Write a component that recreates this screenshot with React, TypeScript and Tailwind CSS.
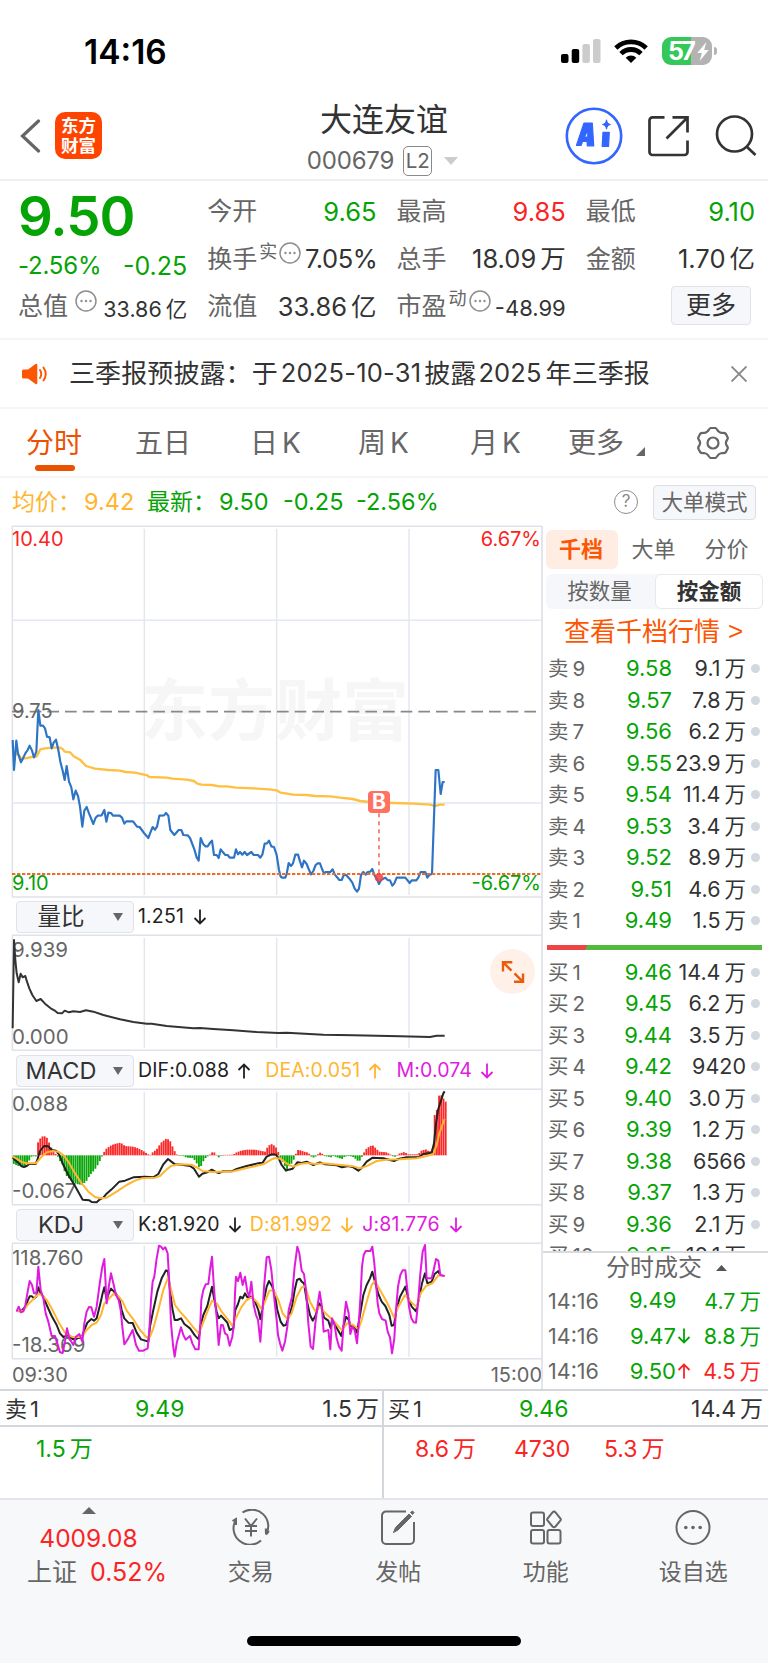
import React from "react";
import { clsx } from "clsx";

interface Level {
  name: string;
  price: string;
  amount: string;
}

const sells: Level[] = [
  { name: "9", price: "9.58", amount: "9.1万" },
  { name: "8", price: "9.57", amount: "7.8万" },
  { name: "7", price: "9.56", amount: "6.2万" },
  { name: "6", price: "9.55", amount: "23.9万" },
  { name: "5", price: "9.54", amount: "11.4万" },
  { name: "4", price: "9.53", amount: "3.4万" },
  { name: "3", price: "9.52", amount: "8.9万" },
  { name: "2", price: "9.51", amount: "4.6万" },
  { name: "1", price: "9.49", amount: "1.5万" },
];

const buys: Level[] = [
  { name: "1", price: "9.46", amount: "14.4万" },
  { name: "2", price: "9.45", amount: "6.2万" },
  { name: "3", price: "9.44", amount: "3.5万" },
  { name: "4", price: "9.42", amount: "9420" },
  { name: "5", price: "9.40", amount: "3.0万" },
  { name: "6", price: "9.39", amount: "1.2万" },
  { name: "7", price: "9.38", amount: "6566" },
  { name: "8", price: "9.37", amount: "1.3万" },
  { name: "9", price: "9.36", amount: "2.1万" },
  { name: "10", price: "9.35", amount: "10.1万" },
];

// Chart series, three units per screen pixel
const PRICE =
  "38,660 42,750 49,662 54,700 63,727 70,713 76,700 83,690 89,677 96,692 102,712 109,695 115,570 121,617 129,617 135,625 141,650 149,652 155,685 161,668 168,659 175,690 181,725 188,752 194,780 200,738 207,785 214,802 220,838 227,812 234,828 240,860 247,920 253,872 260,861 267,880 280,912 287,893 293,887 305,886 313,870 319,905 325,878 333,879 339,887 359,887 366,893 373,911 379,904 399,904 411,920 419,921 432,939 445,954 451,938 458,921 465,929 471,920 478,887 492,886 498,879 505,887 511,930 523,945 536,930 544,930 550,945 563,946 570,954 583,988 590,1012 596,1022 602,954 609,971 616,979 623,979 629,970 636,962 642,1005 650,1005 656,1014 662,988 669,997 676,1005 683,1005 689,1013 702,1013 708,988 714,1003 720,996 727,1004 734,996 741,1005 754,996 761,1005 774,1005 781,1013 787,1004 794,971 801,970 807,962 814,979 822,981 830,1005 837,1050 842,1070 846,1073 856,1073 860,1062 866,1029 873,1038 879,1030 886,1004 894,1004 900,1024 906,1042 912,1022 920,1032 926,1047 933,1063 940,1053 947,1035 953,1030 960,1030 966,1047 972,1060 978,1056 991,1056 998,1048 1004,1063 1018,1080 1025,1080 1032,1064 1038,1065 1050,1078 1057,1088 1064,1106 1071,1115 1077,1106 1083,1065 1090,1056 1097,1064 1103,1056 1111,1055 1117,1047 1123,1065 1130,1075 1137,1092 1143,1080 1156,1073 1163,1080 1170,1081 1177,1097 1183,1090 1190,1073 1216,1073 1229,1089 1235,1081 1249,1081 1255,1073 1262,1056 1276,1056 1282,1073 1289,1064 1296,1062 1307,750 1315,750 1322,822 1328,786 1334,786";
const AVERAGE =
  "38,700 50,702 56,705 63,715 76,715 95,711 109,710 115,700 121,688 135,685 155,683 180,683 188,687 194,695 210,697 221,709 240,719 258,738 285,746 325,750 360,752 377,756 405,758 432,764 440,765 448,771 500,773 517,776 560,779 582,783 592,791 605,794 635,795 658,799 680,799 708,803 760,805 815,809 830,811 842,818 880,824 920,825 945,828 990,829 1020,833 1058,837 1080,843 1110,846 1180,849 1240,851 1290,854 1305,858 1320,854 1334,854";
const RATIO =
  "38,295 42,30 46,90 50,130 56,157 62,131 68,142 76,138 80,152 88,175 97,195 109,213 122,207 135,221 152,235 163,241 173,249 186,250 194,242 207,247 220,244 240,246 258,241 280,245 310,255 360,268 400,276 440,281 455,281 500,288 580,295 600,294 640,297 700,301 770,306 835,309 860,308 970,314 1060,316 1200,319 1290,321 1310,317 1334,317";
const DIF =
  "38,682 45,690 55,698 65,709 72,711 80,708 88,702 107,702 112,690 120,663 132,648 145,649 155,660 168,662 178,675 190,705 205,735 225,768 240,795 248,809 268,811 275,816 290,817 300,808 310,803 318,793 335,778 358,755 375,752 400,742 435,740 460,742 475,732 490,703 504,687 517,697 525,703 545,704 570,708 582,716 597,740 607,731 622,727 635,719 650,727 657,729 668,724 695,724 710,717 740,708 775,700 788,698 800,680 815,673 828,674 836,685 845,705 858,722 866,719 878,716 892,697 905,699 920,695 940,705 960,697 975,703 995,704 1010,706 1026,712 1045,708 1060,712 1075,722 1085,714 1100,695 1118,683 1150,685 1182,693 1195,687 1220,682 1255,682 1270,672 1295,668 1302,640 1308,580 1314,540 1322,515 1330,490 1334,484";
const DEA =
  "38,680 50,686 65,696 80,700 108,700 125,680 140,667 158,663 175,665 190,675 205,695 225,730 245,760 265,785 285,801 300,805 320,803 350,785 380,765 405,752 425,745 465,743 480,738 500,718 515,707 540,703 575,704 590,712 608,723 640,726 700,724 740,714 790,703 815,688 825,684 842,686 855,697 870,706 880,710 900,702 920,699 945,702 970,700 1000,703 1030,706 1060,709 1080,715 1105,706 1130,693 1160,689 1200,688 1250,685 1280,678 1300,672 1310,645 1318,610 1326,588 1334,567";
const J =
  "50,1144 56,1130 63,1147 70,1144 76,1125 83,1085 89,1053 96,1065 102,1090 109,1090 115,1010 122,1080 130,1105 137,1150 145,1175 155,1218 165,1218 172,1240 180,1267 188,1269 195,1235 201,1195 208,1225 220,1245 228,1220 238,1212 247,1235 253,1180 260,1145 267,1131 274,1132 282,1160 290,1130 300,1055 307,1010 313,987 320,1120 327,1065 333,1030 340,1060 348,1095 356,1110 362,1140 367,1190 373,1243 385,1225 398,1200 408,1245 417,1262 430,1262 443,1255 448,1200 453,1110 458,1055 463,1040 470,985 477,947 483,950 489,958 496,952 503,970 508,1060 513,1180 519,1245 524,1280 530,1240 543,1192 550,1215 557,1229 570,1218 577,1240 586,1258 596,1258 601,1180 604,1110 610,1080 617,1063 625,1062 630,1020 636,980 641,1060 645,1115 650,1160 656,1245 663,1185 669,1186 675,1210 682,1215 689,1247 697,1220 702,1180 705,1090 708,1040 714,1053 721,1028 728,1065 735,1040 742,1085 748,1100 754,1055 761,1125 768,1155 774,1170 781,1235 787,1150 793,1060 800,982 807,980 814,1020 820,1080 830,1170 834,1215 840,1240 847,1262 855,1235 862,1190 866,1140 876,1100 884,1010 892,950 898,970 905,1022 912,1032 918,1080 925,1180 932,1250 939,1257 946,1180 953,1125 959,1085 965,1125 971,1205 985,1200 991,1258 996,1165 1003,1180 1010,1225 1017,1250 1025,1262 1031,1180 1038,1115 1046,1150 1051,1212 1057,1190 1064,1200 1071,1240 1077,1170 1082,1090 1086,1010 1091,975 1097,963 1111,963 1117,950 1123,1000 1128,1060 1133,1120 1138,1150 1146,1167 1157,1172 1163,1205 1170,1222 1176,1270 1183,1225 1188,1140 1194,1070 1201,1035 1208,1021 1216,1021 1221,1070 1227,1130 1234,1165 1241,1177 1248,1178 1254,1120 1261,1030 1268,965 1275,945 1280,1045 1295,1045 1301,1020 1308,987 1315,992 1321,1035 1334,1038";
const K =
  "50,1143 63,1144 76,1130 83,1112 89,1099 96,1099 102,1105 109,1100 115,1072 122,1090 130,1100 140,1125 155,1158 170,1185 180,1210 190,1221 203,1216 220,1228 245,1222 253,1200 262,1178 274,1167 282,1172 290,1165 300,1125 308,1090 313,1072 320,1108 327,1088 333,1076 345,1088 358,1105 365,1140 373,1165 385,1178 398,1179 410,1208 423,1228 445,1235 450,1190 460,1140 472,1085 485,1045 498,1021 504,1023 510,1080 517,1135 524,1170 532,1170 543,1165 553,1182 570,1195 585,1217 596,1228 602,1185 610,1155 622,1128 630,1095 636,1070 643,1110 650,1145 656,1165 663,1157 675,1170 682,1178 689,1200 700,1195 706,1140 714,1122 721,1100 728,1105 735,1090 742,1102 754,1100 765,1115 775,1140 781,1168 790,1120 800,1070 807,1053 816,1068 824,1090 832,1140 842,1175 850,1187 858,1185 868,1155 876,1130 884,1080 891,1050 899,1046 905,1055 912,1060 920,1110 930,1155 938,1172 946,1158 958,1120 965,1130 972,1163 985,1172 992,1195 996,1170 1005,1185 1024,1218 1030,1190 1038,1160 1046,1170 1052,1188 1062,1190 1071,1208 1080,1155 1090,1095 1100,1065 1110,1045 1117,1025 1125,1055 1135,1092 1145,1115 1156,1128 1168,1155 1175,1187 1182,1185 1190,1135 1200,1100 1216,1070 1225,1105 1235,1130 1248,1144 1256,1110 1266,1060 1275,1030 1282,1060 1295,1055 1304,1032 1315,1023 1320,1035";
const D =
  "50,1143 70,1142 85,1122 100,1108 115,1092 125,1094 140,1110 155,1135 175,1175 195,1208 215,1220 245,1222 260,1200 275,1185 290,1178 303,1155 313,1120 325,1108 340,1092 355,1098 368,1115 380,1142 400,1168 420,1200 440,1222 450,1220 460,1195 475,1140 490,1080 504,1043 515,1085 525,1125 540,1145 560,1167 580,1192 596,1210 605,1190 620,1150 636,1112 650,1120 665,1145 685,1170 697,1187 710,1160 725,1130 740,1110 755,1102 770,1115 785,1138 795,1115 808,1082 820,1080 835,1110 848,1150 862,1167 875,1150 890,1100 905,1072 915,1068 930,1115 945,1142 958,1130 975,1148 1000,1172 1025,1200 1042,1180 1060,1185 1075,1198 1085,1170 1100,1115 1115,1065 1125,1053 1140,1080 1160,1115 1182,1162 1195,1130 1215,1095 1235,1118 1250,1130 1262,1090 1278,1068 1297,1060 1315,1036 1334,1038";

// MACD histogram envelope around the zero line
const ZERO = 676;
const HIST: [number, number][] = [
  [38, 700], [55, 708], [72, 710], [85, 698], [92, 682], [97, 678], [107, 680], [111, 676], [113, 640], [118, 628],
  [130, 617], [140, 622], [147, 637], [155, 655], [165, 670], [172, 676], [178, 690], [188, 705], [197, 735], [207, 745],
  [218, 755], [230, 762], [247, 765], [260, 752], [270, 735], [285, 718], [295, 702], [305, 682], [307, 676], [311, 668],
  [318, 657], [330, 648], [343, 642], [362, 638], [375, 648], [400, 650], [415, 655], [430, 663], [440, 670], [450, 676],
  [458, 667], [470, 658], [483, 638], [500, 625], [510, 632], [520, 655], [528, 672], [535, 676], [550, 678], [560, 683],
  [580, 684], [590, 700], [600, 717], [607, 698], [618, 682], [627, 677], [632, 671], [640, 664], [647, 672], [652, 677],
  [658, 684], [664, 675], [700, 674], [708, 668], [720, 663], [740, 659], [765, 659], [795, 665], [800, 655], [812, 641],
  [825, 648], [833, 660], [838, 677], [850, 700], [861, 720], [868, 708], [877, 698], [885, 680], [888, 670], [893, 660],
  [902, 661], [912, 665], [925, 668], [930, 675], [935, 681], [943, 683], [950, 677], [955, 671], [962, 667], [970, 674],
  [972, 678], [985, 680], [995, 682], [1000, 678], [1012, 682], [1026, 687], [1035, 679], [1050, 678], [1062, 682],
  [1072, 692], [1083, 692], [1087, 676], [1092, 668], [1100, 655], [1117, 645], [1128, 655], [1137, 665], [1160, 667],
  [1174, 675], [1182, 682], [1190, 677], [1197, 671], [1213, 666], [1225, 673], [1255, 673], [1262, 663], [1277, 658],
  [1287, 664], [1297, 662], [1301, 600], [1305, 540], [1311, 540], [1317, 497], [1325, 496], [1330, 505], [1337, 515],
];

const histAt = (x: number) => {
  const i = HIST.findIndex(([px]) => px >= x);
  if (i <= 0) return HIST[i === 0 ? 0 : HIST.length - 1][1];
  const [x0, y0] = HIST[i - 1];
  const [x1, y1] = HIST[i];
  return y0 + ((y1 - y0) * (x - x0)) / (x1 - x0);
};

const bars = Array.from({ length: 197 }, (_, i) => {
  const x = 41.5 + i * 6.61;
  return { x, y: histAt(x) };
});

// Splits the trailing unit off so it can sit slightly apart from the digits
const Num = ({ v, unit = "ml-[4px]" }: { v: string; unit?: string }) => {
  const m = v.match(/^([^万亿]*)([万亿]?)$/);
  return (
    <span className="whitespace-nowrap">
      {m?.[1]}
      {m?.[2] && <span className={unit}>{m[2]}</span>}
    </span>
  );
};

const Dots = ({ className }: { className?: string }) => (
  <svg viewBox="0 0 22 22" className={clsx("h-[22px] w-[22px] shrink-0", className)}>
    <circle cx="11" cy="11" r="10" fill="none" stroke="#8e8e8e" strokeWidth="1.5" />
    <circle cx="6.5" cy="11" r="1.2" fill="#8e8e8e" />
    <circle cx="11" cy="11" r="1.2" fill="#8e8e8e" />
    <circle cx="15.5" cy="11" r="1.2" fill="#8e8e8e" />
  </svg>
);

const StatusBar = () => (
  <div className="flex h-[92px] items-start pt-[31px] pl-[84px] pr-[51px]">
    <div className="flex h-10 items-center pt-[2px] text-[33.5px] font-semibold tracking-[0px] text-black">14:16</div>
    <div className="ml-auto flex h-10 items-center">
      <svg viewBox="0 0 40 24" className="h-6 w-10">
        <rect x="0" y="15" width="7.5" height="9" rx="2" fill="#000" />
        <rect x="10.7" y="10" width="7.5" height="14" rx="2" fill="#000" />
        <rect x="21.4" y="5" width="7.5" height="19" rx="2" fill="#ccc" />
        <rect x="32" y="0" width="7.5" height="24" rx="2" fill="#ccc" />
      </svg>
      <svg viewBox="0 0 34 24" className="ml-[13px] h-6 w-[34px]" fill="none" stroke="#000" strokeWidth="4.8">
        <path d="M1.8 9a22 22 0 0 1 30.4 0" />
        <path d="M7 14.6a14.3 14.3 0 0 1 20 0" />
        <path d="M17 24l-5.3-5.3a7.6 7.6 0 0 1 10.6 0z" fill="#000" stroke="none" />
      </svg>
      <div className="ml-[14px] flex items-center">
        <div className="flex h-7 w-[50px] items-center rounded-[9px] bg-[linear-gradient(90deg,#34c759_58%,#b3b3b3_58%)] pl-[6px] text-[25px] leading-[28px] font-bold tracking-[-2.8px] text-white">
          57
          <svg viewBox="0 0 12 20" className="ml-[4px] h-[19px] w-[12px]">
            <path d="M9.500 0L0 11.500h4.800L2.500 20 12 8.500H7.200z" fill="#fff" />
          </svg>
        </div>
        <div className="ml-[2px] h-2 w-[3px] rounded-r-full bg-[#b3b3b3]" />
      </div>
    </div>
  </div>
);

const Header = () => (
  <header className="flex h-[89px] items-start border-b-2 border-[#f0f0f0]">
    <div className="flex h-[87px] w-[280px] items-start pl-[20px] pt-5">
      <svg viewBox="0 0 21 34" className="mt-[7px] h-[34px] w-[21px]" fill="none" stroke="#666" strokeWidth="3.2" strokeLinecap="round">
        <path d="M18.5 2L2.5 17l16 15" />
      </svg>
      <div className="ml-3.5 flex h-[47px] w-[47px] flex-col items-center justify-center rounded-[10px] bg-[#ff4400] text-[17.500px] leading-[20px] font-bold text-white">
        <span>东方</span>
        <span>财富</span>
      </div>
    </div>
    <div className="flex flex-1 flex-col items-center pt-[11px]">
      <div className="text-[32px] leading-[34px] text-[#333]">大连友谊</div>
      <div className="mt-[9px] flex h-[30px] items-center pr-[3px] text-[24px] whitespace-nowrap text-[#666]">
        <span className="tracking-[-0.2px]">000679</span>
        <span className="ml-[9px] flex h-[30px] w-[29px] items-center justify-center rounded-[5px] border-[1.5px] border-[#8a8a8a] text-[20.500px] leading-[26px]">
          L2
        </span>
        <svg viewBox="0 0 14 8" className="ml-3 h-2 w-3.5">
          <path d="M0 0h14l-7 8z" fill="#ccc" />
        </svg>
      </div>
    </div>
    <div className="flex w-[280px] justify-end pr-[11px] pt-[15px]">
      <svg viewBox="0 0 58 58" className="h-[58px] w-[58px]">
        <circle cx="29" cy="29" r="27.2" fill="none" stroke="#3366ff" strokeWidth="2.6" />
        <g fill="#3366ff" stroke="#3366ff" strokeWidth="1.2" strokeLinejoin="round">
          <path fillRule="evenodd" d="M11.500 38.300L19 16h8.300l1.400 22.800h-6.400l-.2-4.300h-4.600l-1.500 4zM19.500 30l3.200-7 .1 7z" />
          <path d="M38 25.300h6.300l-.8 14.200h-6.300z" />
        </g>
        <path d="M41.500 12.800c.6 3.200 1.500 4 4 4.700-2.500.7-3.400 1.500-4 4.700-.6-3.200-1.500-4-4-4.700 2.500-.7 3.400-1.500 4-4.700z" fill="#3366ff" stroke="#3366ff" />
      </svg>
      <svg viewBox="0 0 42 42" className="ml-[24px] mt-[8px] h-[42px] w-[42px]" fill="none" stroke="#333" strokeWidth="2.7">
        <path d="M17.500 2.400H5.500a3 3 0 0 0-3 3V37a3 3 0 0 0 3 3h32a3 3 0 0 0 3-3V25.500" />
        <path d="M25.500 2.400h15V17.500M40 3L19.500 23.500" />
      </svg>
      <svg viewBox="0 0 42 42" className="ml-[26px] mt-[8px] h-[42px] w-[42px]" fill="none" stroke="#333" strokeWidth="2.7">
        <circle cx="19.500" cy="19" r="17.500" />
        <path d="M31.500 31.500l9 8.500" />
      </svg>
    </div>
  </header>
);

const Cell = ({ label, value, color = "text-[#333]" }: { label: string; value: string; color?: string }) => (
  <div className="flex h-[47.5px] items-center justify-between">
    <span className="text-[25px] text-[#666]">{label}</span>
    <span className={clsx("text-[25.5px]", color)}>
      <Num v={value} />
    </span>
  </div>
);

const Quote = () => (
  <section className="grid h-[159px] grid-cols-4 gap-x-5 border-b-2 border-[#f5f5f5] pl-[18px] pr-[13px] pt-[7px]">
    <div>
      <div className="flex h-[55px] items-center pt-[2px] text-[54.500px] font-semibold tracking-[-1px] text-[#06a306]">9.50</div>
      <div className="flex h-[40px] items-center justify-between pt-[5px] text-[#06a306]">
        <span className="text-[24px] tracking-[-0.2px]">-2.56%</span>
        <span className="pt-[2px] text-[25px]">-0.25</span>
      </div>
      <div className="flex h-[47.5px] items-center">
        <span className="text-[25px] text-[#666]">总值</span>
        <Dots className="-mt-3 ml-[7px]" />
        <span className="ml-auto pt-1 text-[21.500px] text-[#333]">
          <Num v="33.86亿" />
        </span>
      </div>
    </div>
    <div>
      <Cell label="今开" value="9.65" color="text-[#06a306]" />
      <div className="flex h-[47.5px] items-center">
        <span className="text-[25px] text-[#666]">换手</span>
        <span className="-mt-4 ml-[2px] text-[18px] text-[#666]">实</span>
        <Dots className="-mt-3 ml-[2px]" />
        <span className="-mr-[1px] ml-auto text-[25.5px] tracking-[-0.4px] text-[#333]">7.05%</span>
      </div>
      <Cell label="流值" value="33.86亿" />
    </div>
    <div>
      <Cell label="最高" value="9.85" color="text-[#fa2424]" />
      <Cell label="总手" value="18.09万" />
      <div className="flex h-[47.5px] items-center">
        <span className="text-[25px] text-[#666]">市盈</span>
        <span className="-mt-4 ml-[2px] text-[18px] text-[#666]">动</span>
        <Dots className="-mt-3 ml-[2px]" />
        <span className="ml-auto pt-1 text-[22px] text-[#333]">-48.99</span>
      </div>
    </div>
    <div>
      <Cell label="最低" value="9.10" color="text-[#06a306]" />
      <Cell label="金额" value="1.70亿" />
      <div className="flex h-[47.5px] items-center justify-end pr-[4px] pb-[3px]">
        <button className="h-[39px] w-[80px] rounded-[4px] border-[1.5px] border-[#e2e3e8] bg-[#f6f7fa] text-[25px] leading-[36px] text-[#333]">
          更多
        </button>
      </div>
    </div>
  </section>
);

const Notice = () => (
  <div className="flex h-[69px] items-center border-b-2 border-[#f5f5f5] pl-[22px] pr-[21px]">
    <svg viewBox="0 0 26 22" className="h-[22px] w-[26px]">
      <path d="M0 8q0-1.500 1.500-1.500H6L13.500 1q1.800-.8 1.800 1v18q0 1.800-1.800 1L6 15.500H1.500Q0 15.500 0 14z" fill="#fc5602" />
      <path d="M18 7q2.500 4 0 8M21.500 4.500q4.500 6.500 0 13" fill="none" stroke="#fc5602" strokeWidth="1.900" strokeLinecap="round" />
    </svg>
    <span className="ml-[21px] flex text-[26px] tracking-[0.1px] whitespace-nowrap text-[#333]">
      <span>三季报预披露：于</span>
      <span className="ml-[3px] text-[25.500px] tracking-[0.2px]">2025-10-31</span>
      <span className="ml-[3px]">披露</span>
      <span className="ml-[2px] text-[25.500px]">2025</span>
      <span className="ml-[4px]">年三季报</span>
    </span>
    <svg viewBox="0 0 16 16" className="ml-auto h-4 w-4" stroke="#888" strokeWidth="1.900">
      <path d="M.5.5l15 15M15.500.5l-15 15" />
    </svg>
  </div>
);

const Tabs = () => (
  <nav className="flex h-[69px] items-center border-b-2 border-[#f5f5f5] text-[28px] whitespace-nowrap text-[#666]">
    <div className="relative ml-[26px] w-[109px] text-[#eb5200]">
      分时
      <div className="absolute top-[43px] left-[9px] h-[6px] w-[40px] rounded-full bg-[#eb5200]" />
    </div>
    <div className="w-[115px]">五日</div>
    <div className="w-[108px]">日<span className="ml-1">K</span></div>
    <div className="w-[112px]">周<span className="ml-1">K</span></div>
    <div className="w-[98px]">月<span className="ml-1">K</span></div>
    <div className="flex items-center">
      更多
      <svg viewBox="0 0 9 9" className="mt-[18px] ml-[12px] h-[9px] w-[9px]">
        <path d="M9 0v9H0z" fill="#666" />
      </svg>
    </div>
    <svg viewBox="0 0 34 32" className="ml-[51px] h-8 w-[34px]" fill="none" stroke="#666" strokeWidth="2.200" strokeLinejoin="round">
      <path d="M13 2.500q1-1.500 2-1.500h4q1 0 2 1.500 1.800 3.200 5 3.500 3-.2 3.800.8l1.900 3.600q.5 1-.7 2.600-2.200 3 0 6 1.200 1.600.7 2.600l-1.900 3.600q-.8 1-3.800.8-3.200.3-5 3.500-1 1.500-2 1.500h-4q-1 0-2-1.500-1.800-3.200-5-3.500-3 .2-3.800-.8l-1.900-3.600q-.5-1 .7-2.600 2.200-3 0-6-1.200-1.600-.7-2.600l1.900-3.600q.8-1 3.800-.8 3.200-.3 5-3.500z" />
      <circle cx="17" cy="16" r="5.500" />
    </svg>
  </nav>
);

const Averages = () => (
  <div className="flex h-[48px] items-center pr-[12px] pl-[12px] text-[23px] whitespace-nowrap text-[#06a306]">
    <span className="w-[72px] text-[#ffb52e]">均价：</span>
    <span className="w-[63px] text-[23.500px] text-[#ffb52e]">9.42</span>
    <span className="w-[72px]">最新：</span>
    <span className="w-[64px] text-[23.500px]">9.50</span>
    <span className="w-[73px] text-[23.500px]">-0.25</span>
    <span className="text-[23.500px]">-2.56%</span>
    <span className="ml-auto flex h-[24px] w-[24px] items-center justify-center rounded-full border-[1.5px] border-[#8e8e8e] text-[17px] text-[#888]">
      ?
    </span>
    <button className="ml-[15px] h-[35px] w-[103px] rounded-[4px] border-[1.5px] border-[#dcdfe6] bg-[#f6f7fa] text-[21.500px] leading-[32px] text-[#666]">
      大单模式
    </button>
  </div>
);

const Grid = ({ top, bottom }: { top: number; bottom: number }) => (
  <g stroke="#e3e7ef" strokeWidth="4.500">
    <path d={`M433 ${top + 8}V${bottom - 6}M830 ${top + 8}V${bottom - 6}M1227 ${top + 8}V${bottom - 6}`} />
    <path d={`M36 ${top + 1}H1626M36 ${bottom}H1626M37 ${top}V${bottom}`} stroke="#dfe2e8" />
  </g>
);

const Line = ({ points, stroke, width = 6 }: { points: string; stroke: string; width?: number }) => (
  <polyline points={points} fill="none" stroke={stroke} strokeWidth={width} strokeLinejoin="round" />
);

const Bounds = ({ high, low }: { high: string; low: string }) => (
  <div className="absolute inset-0 flex flex-col justify-between pt-[5px] pb-[4px] text-[20.500px] leading-[20px] text-[#666]">
    <span>{high}</span>
    <span>{low}</span>
  </div>
);

const Selector = ({ name, children }: { name: string; children: React.ReactNode }) => (
  <div className="flex h-[38px] items-center pl-[4px] pt-[1px] text-[19.500px] tracking-[0.15px] whitespace-nowrap text-[#222]">
    <div className="flex h-[32px] w-[118px] items-center rounded-[4px] border-[1.5px] border-[#dfe2e8] bg-[#f6f7fa] tracking-normal text-[#333]">
      <span className="w-[88px] text-center text-[23.500px]">{name}</span>
      <svg viewBox="0 0 10 8" className="ml-[8px] h-2 w-2.5">
        <path d="M0 0h10L5 8z" fill="#666" />
      </svg>
    </div>
    <div className="flex items-center pl-[4px]">{children}</div>
  </div>
);

const Arrow = ({ up, className }: { up?: boolean; className?: string }) => (
  <svg viewBox="0 0 14 16" className={clsx("h-4 w-3.5", className)} fill="none" stroke="currentColor" strokeWidth="1.800">
    <path d={up ? "M7 15.500V1.500M1.500 7L7 1.500 12.500 7" : "M7 .5v14M1.500 9L7 14.500 12.500 9"} />
  </svg>
);

const Charts = () => (
  <div className="w-[530px]">
    <div className="relative h-[371px]">
      <div className="absolute top-[143px] left-[129px] text-[67px] leading-[84px] font-bold text-[#f6f6f6]">东方财富</div>
      <svg viewBox="36 18 1590 1113" className="absolute inset-0 h-[371px] w-[530px] overflow-visible">
        <Grid top={18} bottom={1131} />
        <path d="M36 301H1626M36 849H1626" stroke="#e3e7ef" strokeWidth="4.500" />
        <path d="M36 575H1626" stroke="#888" strokeWidth="5" strokeDasharray="35 18" />
      </svg>
      <div className="absolute inset-0 text-[20px] leading-[20px]">
        <span className="absolute top-[3px] left-0 text-[#fa2424]">10.40</span>
        <span className="absolute top-[175px] left-0 text-[#666]">9.75</span>
        <span className="absolute top-[347px] left-0 text-[#06a306]">9.10</span>
        <span className="absolute top-[3px] right-[1px] text-[#fa2424]">6.67%</span>
        <span className="absolute top-[347px] right-[1px] text-[#06a306]">-6.67%</span>
      </div>
      <svg viewBox="36 18 1590 1113" className="absolute inset-0 h-[371px] w-[530px] overflow-visible">
        <Line points={AVERAGE} stroke="#ffbf40" width={7} />
        <Line points={PRICE} stroke="#2e74c4" width={6.5} />
        <path d="M36 1062H1626" stroke="#f06a28" strokeWidth="6.500" strokeDasharray="10 5" />
        <path d="M1137 880V1062" stroke="#ff6f61" strokeWidth="5" strokeDasharray="12 12" />
        <circle cx="1137" cy="1073" r="13" fill="#ee3f3f" fillOpacity=".85" />
      </svg>
      <div className="absolute top-[265px] left-[356px] flex h-[22px] w-[22px] items-center justify-center rounded-[4px] bg-[#ff7262] text-[21px] leading-[22px] font-bold text-white">
        B
      </div>
    </div>

    <Selector name="量比">
      <span>1.251</span>
      <Arrow className="ml-[9px]" />
    </Selector>
    <div className="relative h-[116px]">
      <Bounds high="9.939" low="0.000" />
      <svg viewBox="36 15 1590 348" className="absolute inset-0 h-[116px] w-[530px] overflow-visible">
        <Grid top={15} bottom={361} />
        <Line points={RATIO} stroke="#333" />
      </svg>
      <div className="absolute top-[14px] right-[7px] flex h-[45px] w-[45px] items-center justify-center rounded-full bg-[#fff0e8]">
        <svg viewBox="0 0 24 24" className="h-6 w-6" fill="none" stroke="#eb5b0c" strokeWidth="2.400">
          <path d="M2 11.500V2.200H11.300M2 2.200l8.500 8.500M22 13.500v8.300H13M22 21.800l-8.500-8.500" />
        </svg>
      </div>
    </div>

    <Selector name="MACD">
      <span>DIF:0.088</span>
      <Arrow up className="ml-[8px]" />
      <span className="ml-[14px] flex items-center text-[#ffb52e]">
        DEA:0.051 <Arrow up className="ml-[8px]" />
      </span>
      <span className="ml-[14px] flex items-center text-[#e01be0]">
        M:0.074 <Arrow className="ml-[8px]" />
      </span>
    </Selector>
    <div className="relative h-[116px]">
      <Bounds high="0.088" low="-0.067" />
      <svg viewBox="36 477 1590 348" className="absolute inset-0 h-[116px] w-[530px] overflow-visible">
        <Grid top={477} bottom={824} />
        {bars.map(({ x, y }) => (
          <rect
            key={x}
            x={x - 2.8}
            width="5.6"
            y={Math.min(y, ZERO)}
            height={Math.max(Math.abs(y - ZERO), 1.5)}
            fill={y < ZERO ? "#fa2828" : "#0aa60a"}
          />
        ))}
        <Line points={DIF} stroke="#222" />
        <Line points={DEA} stroke="#ffb52e" />
      </svg>
    </div>

    <Selector name="KDJ">
      <span>K:81.920</span>
      <Arrow className="ml-[8px]" />
      <span className="ml-[8px] flex items-center text-[#ffb52e]">
        D:81.992 <Arrow className="ml-[8px]" />
      </span>
      <span className="ml-[8px] flex items-center text-[#e01be0]">
        J:81.776 <Arrow className="ml-[9px]" />
      </span>
    </Selector>
    <div className="relative h-[116px]">
      <Bounds high="118.760" low="-18.369" />
      <svg viewBox="36 939 1590 348" className="absolute inset-0 h-[116px] w-[530px] overflow-visible">
        <Grid top={939} bottom={1286} />
        <Line points={K} stroke="#222" />
        <Line points={D} stroke="#ffb52e" />
        <Line points={J} stroke="#e01be0" />
      </svg>
    </div>
    <div className="flex h-[30px] items-center justify-between pt-[2px] text-[20px] text-[#666]">
      <span>09:30</span>
      <span>15:00</span>
    </div>
  </div>
);

const LevelRow = ({ side, level }: { side: string; level: Level }) => (
  <div className="flex h-[31.5px] shrink-0 items-center pl-[5px] text-[22px] leading-[31px] text-[#333]">
    <span className="flex w-[49px] text-[20.500px] text-[#666]">
      {side}
      <span className="ml-[4px]">{level.name}</span>
    </span>
    <span className="w-[75px] text-right text-[#06a306]">{level.price}</span>
    <span className="w-[74px] text-right text-[21.500px]">
      <Num v={level.amount} />
    </span>
    <span className="ml-[5px] h-[9px] w-[9px] rounded-full bg-[#d3d7de]" />
  </div>
);

const OrderBook = () => (
  <aside className="-ml-px flex flex-1 flex-col border-l-2 border-[#e3e5ea]">
    <div className="ml-[3px] flex h-[48px] items-center text-[22px] text-[#666]">
      <span className="flex h-[39px] w-[72px] items-center justify-center rounded-[6px] bg-[#ffede3] pr-[2px] font-bold text-[#fc5602]">千档</span>
      <span className="w-[71px] text-center">大单</span>
      <span className="w-[75px] text-center">分价</span>
    </div>
    <div className="ml-[3px] flex h-[35px] w-[217px] items-center rounded-[6px] bg-[#f6f7fa] text-[21.500px]">
      <span className="w-[109px] pr-[2px] text-center text-[#666]">按数量</span>
      <span className="flex h-[35px] w-[108px] items-center justify-center rounded-[6px] border-[1.5px] border-[#e8e9ec] bg-white font-bold text-[#333]">
        按金额
      </span>
    </div>
    <div className="flex h-[44px] items-center pt-[2px] pl-[21px] text-[26px] text-[#fc5602]">
      查看千档行情<span className="ml-[8px] font-['Liberation_Sans']">&gt;</span>
    </div>
    <div className="flex flex-col">
      {sells.map((l) => (
        <LevelRow key={l.name} side="卖" level={l} />
      ))}
    </div>
    <div className="mt-[9px] mb-[6px] ml-[4px] h-[5px] w-[215px] shrink-0 bg-[linear-gradient(115deg,#ef4444_18.500%,#53b93f_18.500%)]" />
    <div className="flex h-[295px] flex-col overflow-hidden">
      {buys.map((l) => (
        <LevelRow key={l.name} side="买" level={l} />
      ))}
    </div>
    <div className="flex h-[32px] items-center justify-center border-t-2 border-[#d8dae0] pl-[22px] text-[24px] leading-[30px] text-[#666]">
      分时成交
      <svg viewBox="0 0 11 6" className="ml-[14px] h-[6px] w-[11px]">
        <path d="M5.500 0L11 6H0z" fill="#555" />
      </svg>
    </div>
    {[
      { price: "9.49", amount: "4.7万", dir: "" },
      { price: "9.47", amount: "8.8万", dir: "down" },
      { price: "9.50", amount: "4.5万", dir: "up" },
    ].map(({ price, amount, dir }) => (
      <div key={price} className="flex h-[35.3px] items-center pl-[5px] text-[22px] text-[#06a306]">
        <span className="w-[81px] text-[21.500px] text-[#666]">14:16</span>
        <span className="w-[47px] text-right">{price}</span>
        <span className="w-[15px]">
          {dir && <Arrow up={dir === "up"} className={clsx("ml-[1px]", dir === "up" && "text-[#fa2424]")} />}
        </span>
        <span className={clsx("w-[70px] text-right text-[21.500px]", dir === "up" && "text-[#fa2424]")}>
          <Num v={amount} />
        </span>
      </div>
    ))}
  </aside>
);

const Depth = () => (
  <section className="flex h-[109px] text-[23px] text-[#333]">
    <div className="flex w-[384px] flex-col border-r-2 border-[#d3d6db]">
      <div className="flex h-[38px] items-center border-y-2 border-[#d3d6db] pl-[5px] pr-[3px] pt-[3px]">
        <span className="w-[130px] text-[22px]">卖<span className="ml-[3px]">1</span></span>
        <span className="text-[#06a306]">9.49</span>
        <span className="ml-auto"><Num v="1.5万" /></span>
      </div>
      <div className="flex h-[44px] items-center pl-[36px] text-[#06a306]">
        <Num v="1.5万" />
      </div>
    </div>
    <div className="flex flex-1 flex-col">
      <div className="flex h-[38px] items-center border-y-2 border-[#d3d6db] pl-[4px] pr-[5px] pt-[3px]">
        <span className="w-[131px] text-[22px]">买<span className="ml-[3px]">1</span></span>
        <span className="text-[#06a306]">9.46</span>
        <span className="ml-auto"><Num v="14.4万" /></span>
      </div>
      <div className="flex h-[44px] items-center pl-[31px] text-[#fa2424]">
        <span className="w-[99px]"><Num v="8.6万" /></span>
        <span className="w-[90px]">4730</span>
        <Num v="5.3万" />
      </div>
    </div>
  </section>
);

const TabItem = ({ label, children }: { label: string; children: React.ReactNode }) => (
  <div className="flex w-[147.5px] flex-col items-center">
    <svg viewBox="0 0 40 36" className="mt-[9px] h-9 w-10" fill="none" stroke="#666" strokeWidth="2">
      {children}
    </svg>
    <span className="mt-[14px] text-[23px] leading-[26px] text-[#666]">{label}</span>
  </div>
);

const BottomBar = () => (
  <footer className="flex h-[165px] flex-col items-center border-t-2 border-[#e3e5e8] bg-[#f7f8fa]">
    <div className="flex w-full">
      <div className="flex w-[177px] flex-col items-center pt-[7px] text-[24.500px] leading-[28px] text-[#fa2424]">
        <svg viewBox="0 0 14 7" className="h-[7px] w-3.5">
          <path d="M7 0l7 7H0z" fill="#666" />
        </svg>
        <span className="mt-[10px]">4009.08</span>
        <span className="mt-[6px] ml-[17px] flex items-center text-[25px]">
          <span className="text-[#666]">上证</span>
          <span className="ml-[13px]">0.52%</span>
        </span>
      </div>
      <TabItem label="交易">
        <path d="M11.500 3.500A16.500 16.500 0 0 1 35 25.500M35 25.500l3-3.500M35 25.500l-.2-6M30 31.500A16.500 16.500 0 0 1 5 10.500M1.500 12l3.500-2v6" />
        <path d="M14 9.500l6 7.500 6-7.500M20 17v10.500M14 17h12M14 22h12" />
      </TabItem>
      <TabItem label="发帖">
        <path d="M28 2.500H8a4 4 0 0 0-4 4V31a4 4 0 0 0 4 4h24a4 4 0 0 0 4-4V13" />
        <path d="M15.500 23.500l2-5L31 5l2.500 2.500L20 21z" fill="#666" strokeWidth="1" />
        <path d="M32.500 3.500l2-1.500 1.500 1.500-1.500 2z" fill="#666" strokeWidth="1" />
      </TabItem>
      <TabItem label="功能">
        <rect x="5" y="3.500" width="13" height="13.500" rx="2" />
        <rect x="5" y="21" width="13" height="13.500" rx="2" />
        <rect x="21.500" y="21" width="13" height="13.500" rx="2" />
        <path d="M28 2.500q.8 0 1.500 1l5 6q.7 1 0 2l-5 6q-1.500 1.500-3 0l-5-6q-.7-1 0-2l5-6q.7-1 1.500-1z" />
      </TabItem>
      <TabItem label="设自选">
        <circle cx="20" cy="18.500" r="16.500" />
        <g fill="#666" stroke="none">
          <circle cx="12.800" cy="18.500" r="1.800" />
          <circle cx="20" cy="18.500" r="1.800" />
          <circle cx="27.200" cy="18.500" r="1.800" />
        </g>
      </TabItem>
    </div>
    <div className="mt-auto mb-[17px] h-[10px] w-[274px] rounded-full bg-black" />
  </footer>
);

export default function App() {
  return (
    <div className="w-[768px] overflow-hidden bg-white font-['Inter','Noto_Sans_CJK_SC',sans-serif]">
      <StatusBar />
      <Header />
      <Quote />
      <Notice />
      <Tabs />
      <Averages />
      <main className="flex h-[863px] pl-[12px]">
        <Charts />
        <OrderBook />
      </main>
      <Depth />
      <BottomBar />
    </div>
  );
}
